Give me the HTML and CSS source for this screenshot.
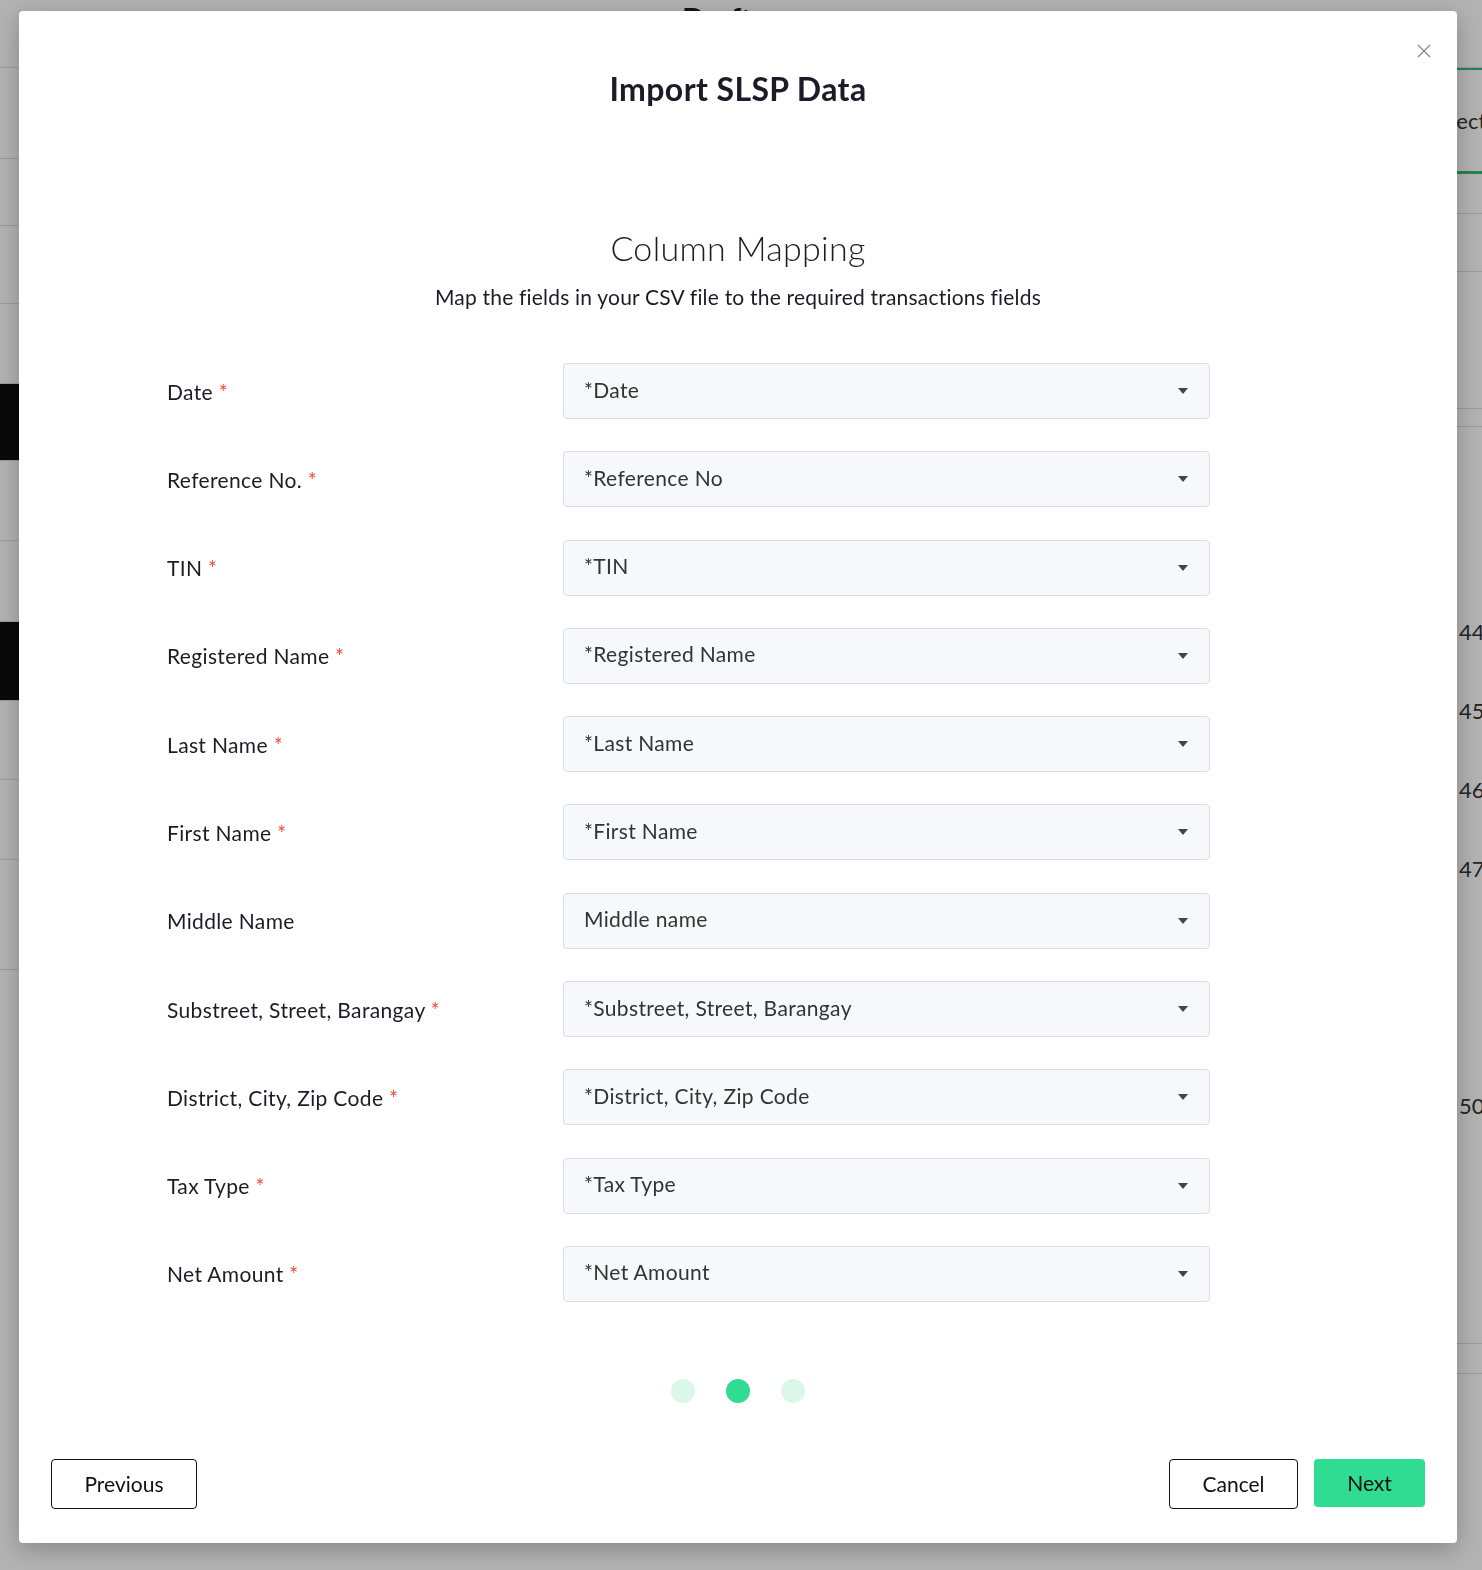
FILE: index.html
```html
<!DOCTYPE html>
<html lang="en">
<head>
    <meta charset="UTF-8">
    <meta name="viewport" content="width=device-width, initial-scale=1.0">
    <title>Import SLSP Data</title>
    <link rel="stylesheet" href="styles.css">
</head>
<body>

    <!-- Page behind the dialog -->
    <div class="page">
        <div class="page-header">
            <h1 class="page-title">Drafts</h1>
        </div>
        <div class="page-body">
            <aside class="sidebar">
                <div class="nav-item" style="height: 91px"></div>
                <div class="nav-item" style="height: 67px"></div>
                <div class="nav-item" style="height: 78px"></div>
                <div class="nav-item" style="height: 80px"></div>
                <div class="nav-item nav-active" style="height: 77px"></div>
                <div class="nav-item" style="height: 80px"></div>
                <div class="nav-item" style="height: 81px"></div>
                <div class="nav-item nav-active" style="height: 79px"></div>
                <div class="nav-item" style="height: 79px"></div>
                <div class="nav-item" style="height: 80px"></div>
                <div class="nav-item" style="height: 110px"></div>
            </aside>
            <main class="content">
                <div class="tabs">
                    <span class="tab">Collections</span>
                </div>
                <div class="table-row" style="height: 40px"></div>
                <div class="table-row" style="height: 58px"></div>
                <div class="table-row" style="height: 137px"></div>
                <div class="table-row" style="height: 18px"></div>
                <div class="table-row no-line" style="height: 165px"></div>
                <div class="table-row num">44</div>
                <div class="table-row num">45</div>
                <div class="table-row num">46</div>
                <div class="table-row num">47</div>
                <div class="table-row num"></div>
                <div class="table-row num"></div>
                <div class="table-row num">50</div>
                <div class="table-row" style="height: 199px"></div>
                <div class="table-row" style="height: 30px"></div>
            </main>
        </div>
    </div>

    <!-- Import dialog -->
    <div class="overlay">
        <div class="modal">
            <button class="close-button" aria-label="Close">
                <svg width="14" height="14" viewBox="0 0 14 14">
                    <path d="M1 1L13 13M13 1L1 13" stroke="#8c8c8c" stroke-width="1.4" fill="none"/>
                </svg>
            </button>

            <h2 class="modal-title">Import SLSP Data</h2>

            <div class="step-heading">
                <h3>Column Mapping</h3>
                <p>Map the fields in your CSV file to the required transactions fields</p>
            </div>

            <div class="mapping-form" id="mappingForm"></div>

            <div class="steps">
                <span class="dot"></span>
                <span class="dot dot-active"></span>
                <span class="dot"></span>
            </div>

            <div class="modal-footer">
                <button class="btn btn-outline">Previous</button>
                <div class="footer-right">
                    <button class="btn btn-outline btn-cancel">Cancel</button>
                    <button class="btn btn-primary">Next</button>
                </div>
            </div>
        </div>
    </div>

    <script>
        // Fields that the CSV columns get mapped to
        const fields = [
            { label: "Date", value: "*Date", required: true },
            { label: "Reference No.", value: "*Reference No", required: true },
            { label: "TIN", value: "*TIN", required: true },
            { label: "Registered Name", value: "*Registered Name", required: true },
            { label: "Last Name", value: "*Last Name", required: true },
            { label: "First Name", value: "*First Name", required: true },
            { label: "Middle Name", value: "Middle name", required: false },
            { label: "Substreet, Street, Barangay", value: "*Substreet, Street, Barangay", required: true },
            { label: "District, City, Zip Code", value: "*District, City, Zip Code", required: true },
            { label: "Tax Type", value: "*Tax Type", required: true },
            { label: "Net Amount", value: "*Net Amount", required: true }
        ];

        const form = document.getElementById("mappingForm");

        fields.forEach(field => {
            form.innerHTML += `
                <label class="field-label">${field.label}${field.required ? ' <span class="required">*</span>' : ''}</label>
                <div class="select-box">
                    <span>${field.value}</span>
                    <svg class="caret" width="10" height="6" viewBox="0 0 10 6"><path d="M0 0H10L5 6Z" fill="#444"/></svg>
                </div>
            `;
        });
    </script>

</body>
</html>
```

FILE: styles.css
```css
/* General Styling */
* {
    box-sizing: border-box;
}

body {
    margin: 0;
    font-family: Lato, "Open Sans", Arial, sans-serif;
    color: #1c1c28;
    background-color: #ffffff;
    height: 1570px;
    overflow: hidden;
}

/* Page behind the dialog */
.page {
    height: 100%;
}

.page-header {
    height: 68px;
    border-bottom: 1px solid #dcdcdc;
}

.page-title {
    margin: 0;
    padding: 0 0 0 682px;
    font-size: 30px;
    font-weight: 700;
}

.page-body {
    display: flex;
}

.sidebar {
    width: 220px;
}

.nav-item {
    border-bottom: 1px solid #dcdcdc;
}

.nav-active {
    background-color: #0d0d0d;
}

.content {
    flex: 1;
    overflow: hidden;
}

.tabs {
    height: 106px;
    border-top: 2px solid #3cb878;
    border-bottom: 3px solid #3cb878;
    display: flex;
    align-items: center;
    padding-left: 1199px;
    font-size: 22px;
    color: #333333;
    white-space: nowrap;
}

.table-row {
    border-bottom: 1px solid #dcdcdc;
}

.no-line {
    border-bottom: none;
}

.table-row.num {
    height: 79px;
    border-bottom: none;
    font-size: 22px;
    color: #333333;
    line-height: 79px;
    padding-left: 1239px;
}

/* Dialog overlay */
.overlay {
    position: fixed;
    inset: 0;
    background-color: rgba(0, 0, 0, 0.3);
    padding: 11px 25px 0 19px;
}

.modal {
    position: relative;
    background-color: #ffffff;
    border-radius: 4px;
    box-shadow: 0 6px 24px rgba(0, 0, 0, 0.25);
    height: 1532px;
    padding: 58px 32px 0 32px;
}

.close-button {
    position: absolute;
    top: 33px;
    right: 26px;
    background: none;
    border: none;
    padding: 0;
    cursor: pointer;
}

.modal-title {
    margin: 0;
    text-align: center;
    font-size: 32px;
    font-weight: 700;
    line-height: 40px;
    letter-spacing: 0.4px;
}

.step-heading {
    margin-top: 119px;
    text-align: center;
}

.step-heading h3 {
    margin: 0;
    font-size: 34px;
    font-weight: 300;
    line-height: 40px;
    letter-spacing: 0.3px;
}

.step-heading p {
    margin: 17px 0 0;
    font-size: 21px;
    font-weight: 400;
    line-height: 24px;
    letter-spacing: 0.2px;
}

/* Mapping rows */
.mapping-form {
    display: grid;
    grid-template-columns: 396px 647px;
    row-gap: 32.3px;
    margin: 54px 0 0 116px;
    align-items: center;
}

.field-label {
    font-size: 21px;
    color: #1c1c28;
    letter-spacing: 0.35px;
}

.required {
    color: #f5483b;
}

.select-box {
    height: 56px;
    background-color: #f7f8fb;
    border: 1px solid #dcdde0;
    border-radius: 4px;
    padding: 0 21px 4px 20px;
    display: flex;
    justify-content: space-between;
    align-items: center;
    font-size: 21px;
    color: #333333;
    letter-spacing: 0.35px;
}

.caret {
    margin-top: 4px;
}

/* Step dots */
.steps {
    display: flex;
    justify-content: center;
    gap: 31px;
    margin-top: 77px;
}

.dot {
    width: 24px;
    height: 24px;
    border-radius: 50%;
    background-color: #dbf7ea;
}

.dot-active {
    background-color: #2fdc91;
}

/* Footer buttons */
.modal-footer {
    display: flex;
    justify-content: space-between;
    margin-top: 56px;
}

.footer-right {
    display: flex;
    gap: 16px;
    align-items: flex-start;
}

.btn {
    height: 50px;
    padding: 0 20px;
    font-family: inherit;
    font-size: 21px;
    border-radius: 4px;
    cursor: pointer;
    color: #111111;
}

.btn-outline {
    width: 146px;
    background-color: #ffffff;
    border: 1px solid #111111;
}

.btn-cancel {
    width: 129px;
}

.btn-primary {
    width: 111px;
    height: 48px;
    background-color: #2fdc91;
    border: none;
}

.btn:hover {
    opacity: 0.9;
}
```
